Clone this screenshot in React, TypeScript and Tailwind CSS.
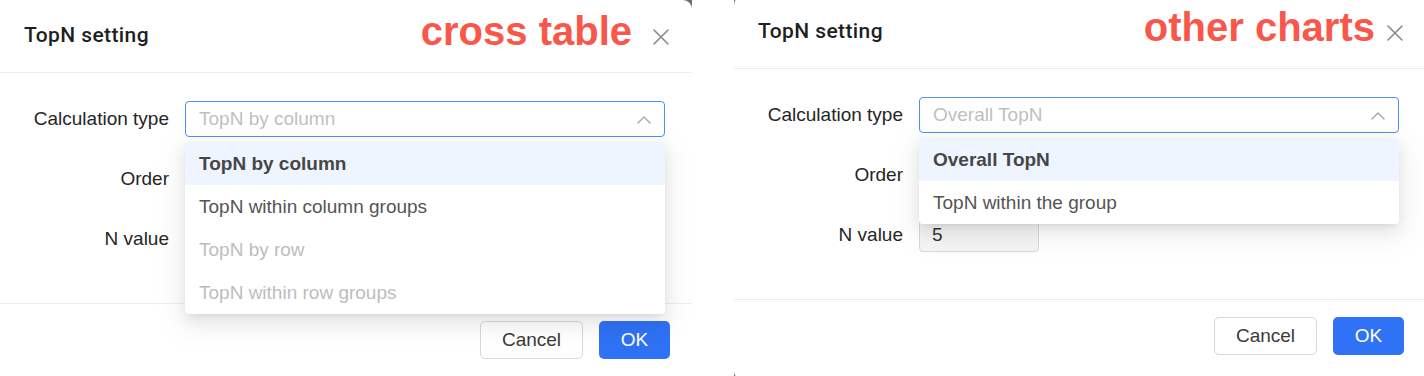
import React from "react";

type Opt = { label: string; selected?: boolean; disabled?: boolean };

function CloseIcon() {
  return (
    <svg width="18" height="18" viewBox="0 0 18 18" fill="none">
      <path d="M2 2L16 16M16 2L2 16" stroke="#8a8a8a" strokeWidth="1.6" strokeLinecap="round" />
    </svg>
  );
}

function ChevronUp() {
  return (
    <svg width="14" height="9" viewBox="0 0 14 9" fill="none">
      <path d="M1 8L7 2L13 8" stroke="#a6a6a6" strokeWidth="1.4" strokeLinecap="round" strokeLinejoin="round" />
    </svg>
  );
}

function Dialog({
  note,
  noteGap,
  placeholder,
  options,
  shift,
  showN,
}: {
  note: string;
  noteGap: string;
  placeholder: string;
  options: Opt[];
  shift: boolean;
  showN: boolean;
}) {
  return (
    <div className="relative w-[692px] h-[376px] shrink-0 overflow-hidden bg-[#6e6e6e]">
      <div
        className={
          "relative flex flex-col h-[384px] bg-white rounded-[9px] " +
          (shift ? "-mt-[4px]" : "mt-0 rounded-tl-none")
        }
      >
        {/* header */}
        <div className="flex h-[73px] items-center justify-between border-b border-[#ececec] pl-6 pr-[22px]">
          <div
            className="text-[21px] font-medium tracking-[0.4px] text-[#1f1f1f]"
            style={{ fontFamily: 'Roboto, "Liberation Sans", Arial, sans-serif' }}
          >
            TopN setting
          </div>
          <div className={"flex items-center " + noteGap}>
            <span className="-mt-[10px] text-[40px] font-bold leading-none text-[#fa574b]">{note}</span>
            <span className="mt-[2px]">
              <CloseIcon />
            </span>
          </div>
        </div>

        {/* body */}
        <div className="flex h-[230px] flex-col gap-6 pr-[27px] pt-[28px]">
          {/* calculation type */}
          <div className="flex h-9 items-center gap-4">
            <div className="w-[169px] shrink-0 text-right text-[19px] text-[#262626]">Calculation type</div>
            <div className="relative flex-1">
              <div className="flex h-[36px] items-center justify-between rounded-[4px] border border-[#4d8ef8] pl-[13px] pr-[13px]">
                <span className="text-[19px] text-[#bfbfbf]">{placeholder}</span>
                <ChevronUp />
              </div>
              <div className="absolute left-0 right-0 top-[41px] z-10 overflow-hidden rounded-[4px] bg-white shadow-[0_6px_16px_0_rgba(0,0,0,0.08),0_3px_6px_-4px_rgba(0,0,0,0.12),0_9px_28px_8px_rgba(0,0,0,0.05)]">
                {options.map((o) => (
                  <div
                    key={o.label}
                    className={
                      "flex h-[43px] items-center pl-[14px] pt-[2px] text-[19px] " +
                      (o.selected
                        ? "bg-[#eff5fe] font-bold text-[#464646]"
                        : o.disabled
                        ? "text-[#bdbdbd]"
                        : "text-[#555555]")
                    }
                  >
                    {o.label}
                  </div>
                ))}
              </div>
            </div>
          </div>

          {/* order */}
          <div className="flex h-9 items-center gap-4">
            <div className="w-[169px] shrink-0 text-right text-[19px] text-[#262626]">Order</div>
            <div className="flex-1" />
          </div>

          {/* N value */}
          <div className="flex h-9 items-center gap-4">
            <div className="w-[169px] shrink-0 text-right text-[19px] text-[#262626]">N value</div>
            <div className="flex-1">
              {showN && (
                <div className="flex h-[34px] w-[120px] items-center rounded-[4px] border border-[#d9d9d9] bg-[#f5f5f5] pl-[12px] text-[19px] text-[#333333]">
                  5
                </div>
              )}
            </div>
          </div>
        </div>

        {/* footer */}
        <div className="flex justify-end gap-4 border-t border-[#ececec] pr-[22px] pt-[17px]">
          <div className="flex h-[38px] w-[103px] items-center justify-center rounded-[5px] border border-[#d9d9d9] bg-white text-[19px] text-[#3a3a3a]">
            Cancel
          </div>
          <div className="flex h-[38px] w-[71px] items-center justify-center rounded-[5px] bg-[#3072f6] text-[19px] text-white">
            OK
          </div>
        </div>
      </div>
    </div>
  );
}

export default function App() {
  return (
    <div
      className="flex h-[376px] w-[1424px] overflow-hidden bg-white"
      style={{ fontFamily: '"Liberation Sans", Arial, sans-serif' }}
    >
      <Dialog
        note="cross table"
        noteGap="gap-[20px]"
        placeholder="TopN by column"
        shift={false}
        showN={false}
        options={[
          { label: "TopN by column", selected: true },
          { label: "TopN within column groups" },
          { label: "TopN by row", disabled: true },
          { label: "TopN within row groups", disabled: true },
        ]}
      />
      <div className="w-[42px] shrink-0" />
      <Dialog
        note="other charts"
        noteGap="gap-[11px]"
        placeholder="Overall TopN"
        shift={true}
        showN={true}
        options={[{ label: "Overall TopN", selected: true }, { label: "TopN within the group" }]}
      />
    </div>
  );
}
